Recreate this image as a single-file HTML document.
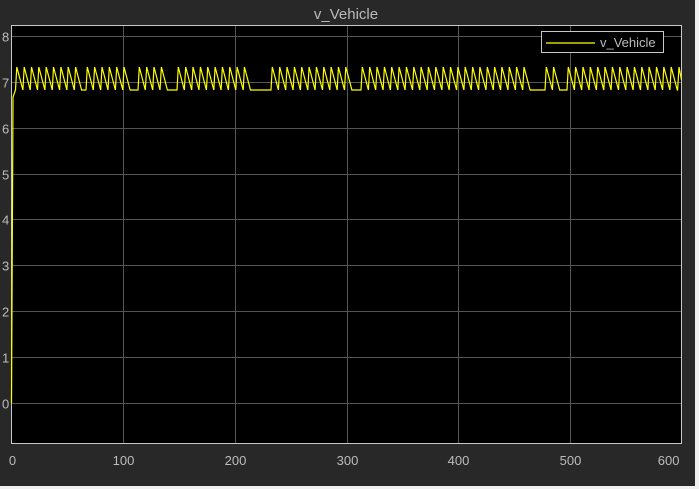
<!DOCTYPE html>
<html><head><meta charset="utf-8"><style>
html,body{margin:0;padding:0;background:#f0f0f0;}
#w{position:absolute;left:0;top:0;width:695px;height:486px;background:#282828;overflow:hidden;}
svg{position:absolute;left:0;top:0;}
text{font-family:"Liberation Sans",sans-serif;fill:#bcbcbc;}
</style></head><body>
<div id="w">
<svg width="699" height="489" xmlns="http://www.w3.org/2000/svg">
<rect x="11.5" y="25.5" width="670" height="418" fill="#000"/>
<g stroke="#555" stroke-width="1" id="grid"></g>
<rect x="11.5" y="25.5" width="670" height="418" fill="none" stroke="#c8c8c8" stroke-width="1"/>
<text x="346" y="19" font-size="15" text-anchor="middle" fill="#c8c8c8">v_Vehicle</text>
<g id="lbl" font-size="13"></g>
<polyline id="sig" fill="none" stroke="#ffff00" stroke-width="1.2" points=""/>
<rect x="541.5" y="31.5" width="122" height="21" fill="#000" stroke="#c8c8c8"/>
<line x1="546" y1="43" x2="595" y2="43" stroke="#ffff00" stroke-width="1.2"/>
<text x="600" y="47" font-size="13" fill="#e0e0e0">v_Vehicle</text>
</svg>
</div>
<script>
var ns="http://www.w3.org/2000/svg";
var g=document.getElementById('grid'),l=document.getElementById('lbl');
function Y(v){return 403-45.9*v;}
function X(t){return 11.5+t*670/600;}
for(var v=0;v<=8;v++){var y=Math.round(Y(v))+0.5;var e=document.createElementNS(ns,'line');e.setAttribute('x1',12);e.setAttribute('x2',681);e.setAttribute('y1',y);e.setAttribute('y2',y);g.appendChild(e);
var t=document.createElementNS(ns,'text');t.setAttribute('x',2);t.setAttribute('y',y+5);t.textContent=v;l.appendChild(t);}
for(var k=0;k<=6;k++){var x=Math.round(X(k*100))+0.5;if(k>0&&k<6){var e=document.createElementNS(ns,'line');e.setAttribute('y1',26);e.setAttribute('y2',443);e.setAttribute('x1',x);e.setAttribute('x2',x);g.appendChild(e);}
var t=document.createElementNS(ns,'text');t.setAttribute('x',k==6?x-3:x);t.setAttribute('y',465);t.setAttribute('text-anchor',k==6?'end':'middle');t.textContent=k*100;l.appendChild(t);}
var p=7.35,lo=90,hi=67;
var segs=[[15.5,9],[86,6],[138,4],[177,10],[271,11],[361,23],[545,1.6],[567,15]];
var pts=[[11.5,403],[13,97]];
var cur=13;
segs.forEach(function(s){var x0=s[0];pts.push([x0,lo]);for(var i=0;i<s[1];i++){var a=x0+i*p;pts.push([a+1.3,hi]);var b=Math.min(a+p,682);pts.push([b,lo]);}});
pts.push([677.6,lo]);pts.push([679,hi]);pts.push([681.5,80]);
document.getElementById('sig').setAttribute('points',pts.map(function(q){return q[0].toFixed(1)+','+q[1];}).join(' '));
</script>
</body></html>
